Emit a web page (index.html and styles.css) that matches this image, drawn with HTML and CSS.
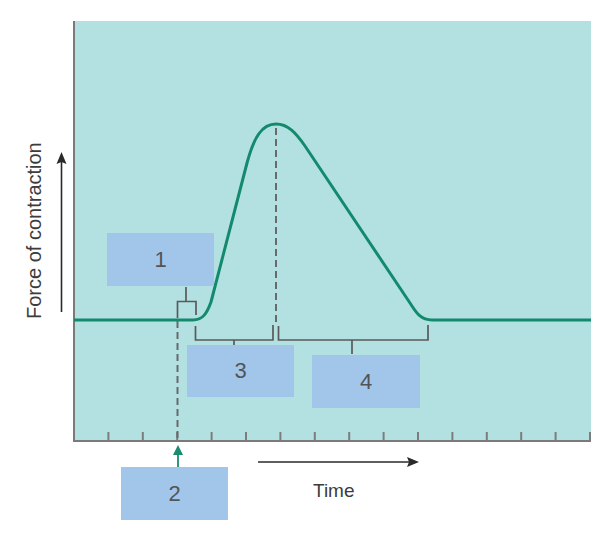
FILE: index.html
```html
<!DOCTYPE html>
<html>
<head>
<meta charset="utf-8">
<link rel="stylesheet" href="styles.css">
</head>
<body>
<div class="figure">
  <svg class="chart" width="600" height="540" viewBox="0 0 600 540" xmlns="http://www.w3.org/2000/svg">
    <rect class="panel" x="74" y="21" width="517" height="420"/>
    <!-- ticks -->
    <g class="ticks">
      <line x1="108.4" y1="432" x2="108.4" y2="441"/>
      <line x1="142.8" y1="432" x2="142.8" y2="441"/>
      <line x1="177.2" y1="432" x2="177.2" y2="441"/>
      <line x1="211.6" y1="432" x2="211.6" y2="441"/>
      <line x1="246" y1="432" x2="246" y2="441"/>
      <line x1="280.4" y1="432" x2="280.4" y2="441"/>
      <line x1="314.8" y1="432" x2="314.8" y2="441"/>
      <line x1="349.2" y1="432" x2="349.2" y2="441"/>
      <line x1="383.6" y1="432" x2="383.6" y2="441"/>
      <line x1="418" y1="432" x2="418" y2="441"/>
      <line x1="452.4" y1="432" x2="452.4" y2="441"/>
      <line x1="486.8" y1="432" x2="486.8" y2="441"/>
      <line x1="521.2" y1="432" x2="521.2" y2="441"/>
      <line x1="555.6" y1="432" x2="555.6" y2="441"/>
      <line x1="590" y1="432" x2="590" y2="441"/>
    </g>
    <!-- axes -->
    <path class="axis" d="M74 21 V442 M73 441 H591"/>
    <!-- dashed guides -->
    <path class="dash" d="M177.5 321 V441"/>
    <path class="dash" d="M276 128 V326"/>
    <!-- brackets -->
    <path class="bracket" d="M186 287 V301.5 M177.5 318 V301.5 H196 V315"/>
    <path class="bracket" d="M195.5 326 V340 H273 V325 M234 340 V345"/>
    <path class="bracket" d="M278.5 326 V340 H428 V325 M352 340 V354"/>
    <!-- twitch curve -->
    <path class="curve" d="M74 320 L193 320 C203 320 207 313 211 302 L247 163 C254 137 262 124 276 124 C288 124 296 133 305 146 L410 303 C416 312 420 320 432 320 L591 320"/>
    <!-- y axis arrow -->
    <path class="arrow-line" d="M61.5 312 V160"/>
    <path class="arrow-head" d="M61.5 152 L66.5 164 L61.5 162 L56.5 164 Z"/>
    <!-- time arrow -->
    <path class="arrow-line" d="M258 462 H410"/>
    <path class="arrow-head" d="M419 462 L407 457 L409 462 L407 467 Z"/>
    <!-- stimulus arrow -->
    <path class="stim-line" d="M178 467 V452"/>
    <path class="stim-head" d="M178 445 L183 455 L173 455 Z"/>
  </svg>

  <div class="box box-1">1</div>
  <div class="box box-2">2</div>
  <div class="box box-3">3</div>
  <div class="box box-4">4</div>

  <div class="ylabel">Force of contraction</div>
  <div class="xlabel">Time</div>
</div>
</body>
</html>
```

FILE: styles.css
```css
html, body {
  margin: 0;
  padding: 0;
  background: #ffffff;
}

.figure {
  position: relative;
  width: 600px;
  height: 540px;
  font-family: "Liberation Sans", Arial, sans-serif;
  color: #3c3c3c;
}

.chart {
  display: block;
}

.panel {
  fill: #b3e1e2;
}

.ticks line {
  stroke: #7c7c7c;
  stroke-width: 2;
}

.axis {
  fill: none;
  stroke: #7a7a7a;
  stroke-width: 2;
}

.dash {
  fill: none;
  stroke: #666a6c;
  stroke-width: 2;
  stroke-dasharray: 7 4;
}

.bracket {
  fill: none;
  stroke: #5a5a5a;
  stroke-width: 1.7;
}

.curve {
  fill: none;
  stroke: #138a6e;
  stroke-width: 3;
  stroke-linejoin: round;
}

.arrow-line {
  fill: none;
  stroke: #2a2a2a;
  stroke-width: 1.6;
}

.arrow-head {
  fill: #2a2a2a;
}

.stim-line {
  fill: none;
  stroke: #1a8c6e;
  stroke-width: 1.8;
}

.stim-head {
  fill: #1a8c6e;
}

.box {
  position: absolute;
  width: 107px;
  height: 53px;
  background: #a2c5ea;
  display: flex;
  align-items: center;
  justify-content: center;
  font-size: 22px;
  color: #525558;
}

.box-1 { left: 107px; top: 233px; }
.box-2 { left: 121px; top: 467px; }
.box-3 { left: 187px; top: 345px; height: 52px; }
.box-4 { left: 312px; top: 355px; width: 108px; }

.ylabel {
  position: absolute;
  left: 23px;
  top: 142px;
  height: 177px;
  line-height: 22px;
  font-size: 20px;
  writing-mode: vertical-rl;
  transform: rotate(180deg);
  text-align: center;
  white-space: nowrap;
}

.xlabel {
  position: absolute;
  left: 313px;
  top: 480px;
  font-size: 19px;
  line-height: 22px;
}
```
